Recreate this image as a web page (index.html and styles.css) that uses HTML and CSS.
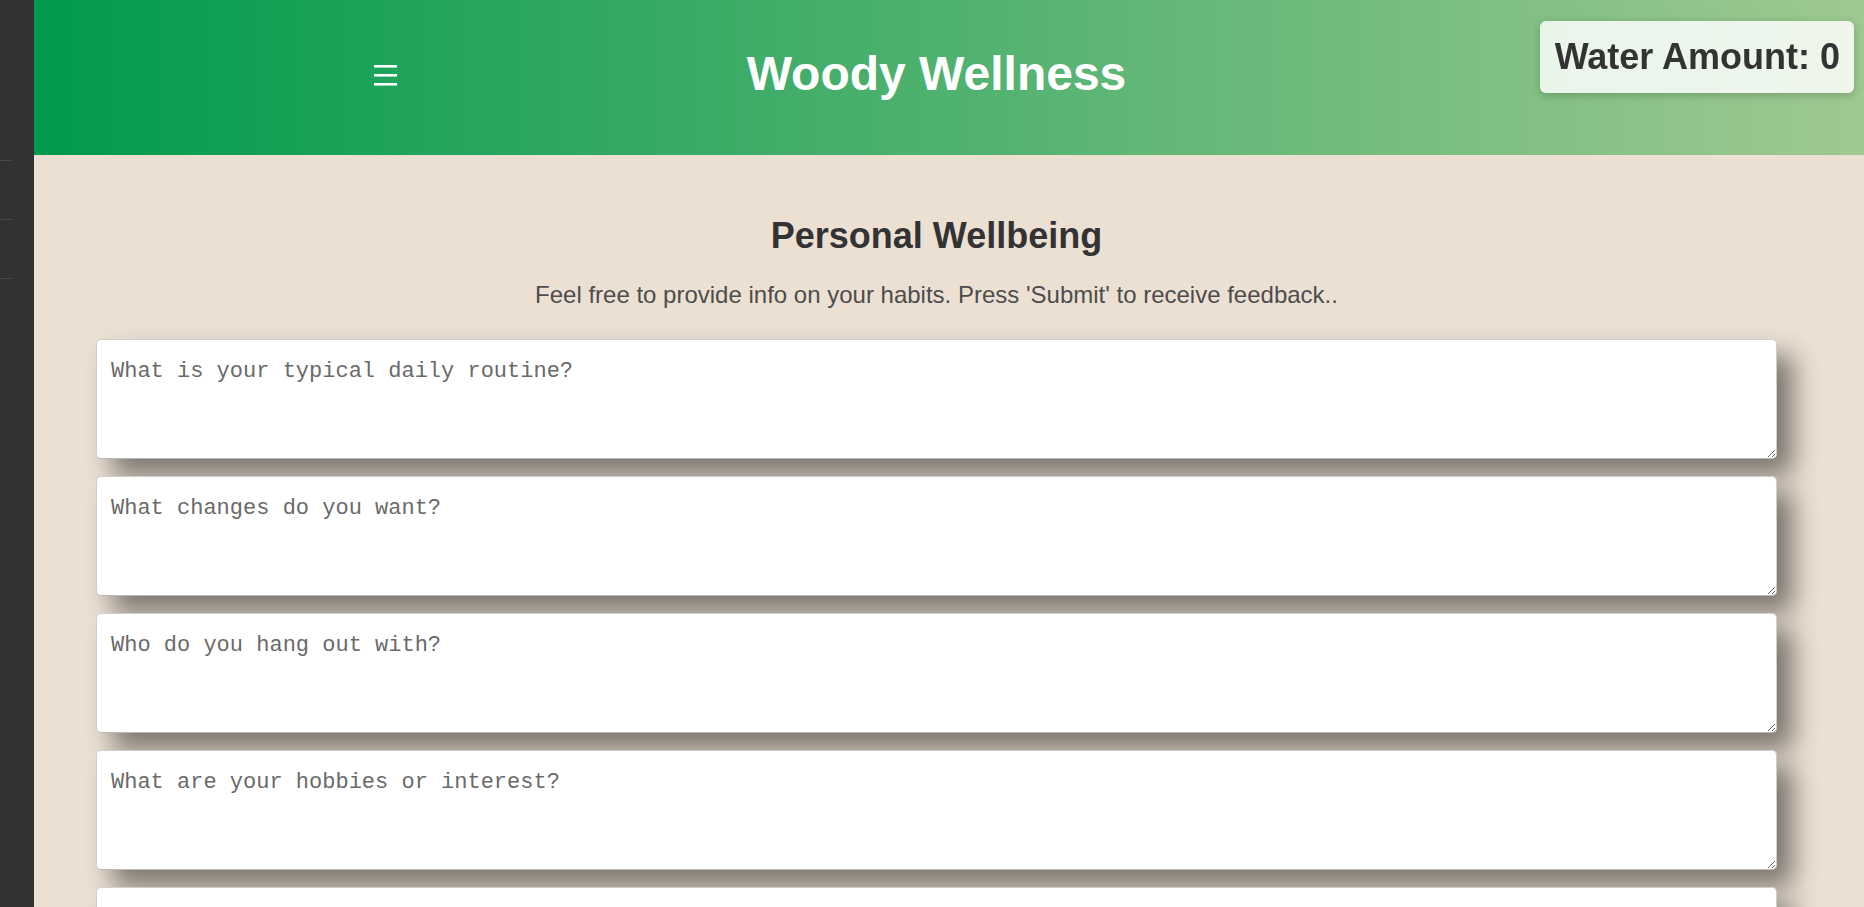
FILE: index.html
```html
<!DOCTYPE html>
<html lang="en">
<head>
<meta charset="utf-8">
<title>Woody Wellness</title>
<link rel="stylesheet" href="styles.css">
</head>
<body>
  <aside class="sidebar">
    <span class="side-line"></span>
    <span class="side-line"></span>
    <span class="side-line"></span>
  </aside>
  <div class="page">
    <header class="topbar">
      <div class="topbar-inner">
        <button class="menu-btn" aria-label="Menu">
          <svg width="23" height="21" viewBox="0 0 23 21"><rect x="0" y="0" width="23" height="2.6" fill="#fff"/><rect x="0" y="9" width="23" height="2.6" fill="#fff"/><rect x="0" y="18" width="23" height="2.6" fill="#fff"/></svg>
        </button>
        <h1 class="brand">Woody Wellness</h1>
        <div></div>
      </div>
    </header>
    <div class="water-box">Water Amount: 0</div>
    <main class="content">
      <h2 class="section-title">Personal Wellbeing</h2>
      <p class="section-sub">Feel free to provide info on your habits. Press 'Submit' to receive feedback..</p>
      <form class="habit-form">
        <textarea class="habit-field" placeholder="What is your typical daily routine?"></textarea>
        <textarea class="habit-field" placeholder="What changes do you want?"></textarea>
        <textarea class="habit-field" placeholder="Who do you hang out with?"></textarea>
        <textarea class="habit-field" placeholder="What are your hobbies or interest?"></textarea>
        <textarea class="habit-field" placeholder="What do you usually eat?"></textarea>
      </form>
    </main>
  </div>
</body>
</html>
```
FILE: styles.css
```css
html, body {
  margin: 0;
  padding: 0;
}
body {
  display: flex;
  min-height: 100vh;
  background: #ece0d3;
  font-family: "Liberation Sans", Arial, sans-serif;
  overflow: hidden;
}
.sidebar {
  width: 34px;
  flex: 0 0 34px;
  background: #323232;
  display: flex;
  flex-direction: column;
  padding-top: 160px;
  box-sizing: border-box;
}
.side-line {
  display: block;
  width: 12px;
  height: 1px;
  background: #4a4a4a;
  margin-bottom: 58px;
}
.page {
  flex: 1;
  display: flex;
  flex-direction: column;
  min-width: 0;
}
.topbar {
  height: 155px;
  background: linear-gradient(to right, #009a4d, #9fc991);
  display: flex;
  align-items: center;
}
.topbar-inner {
  flex: 1;
  display: grid;
  grid-template-columns: 1fr auto 1fr;
  align-items: center;
  padding-right: 25px;
}
.menu-btn {
  justify-self: center;
  background: none;
  border: 0;
  padding: 0;
  margin-right: 9px;
  margin-top: -5px;
  display: flex;
  cursor: pointer;
}
.brand {
  margin: 0;
  color: #fff;
  font-size: 48px;
  font-weight: bold;
  line-height: 1.15;
  margin-top: -7px;
}
.water-box {
  position: fixed;
  top: 21px;
  right: 10px;
  background: rgba(255, 255, 255, 0.83);
  color: #333;
  font-size: 36px;
  font-weight: bold;
  padding: 15px 14px 15px 15px;
  border-radius: 6px;
  box-shadow: 0 2px 8px rgba(0, 0, 0, 0.22);
}
.content {
  padding: 0 87px 0 62px;
  display: flex;
  flex-direction: column;
  align-items: stretch;
}
.section-title {
  margin: 60px 0 0;
  text-align: center;
  font-size: 36px;
  font-weight: bold;
  color: #333;
  line-height: 41px;
}
.section-sub {
  margin: 25px 0 0;
  text-align: center;
  font-size: 24px;
  color: #4d4d4d;
  line-height: 28px;
}
.habit-form {
  margin-top: 30px;
  display: flex;
  flex-direction: column;
  gap: 17px;
}
.habit-field {
  display: block;
  box-sizing: border-box;
  width: 100%;
  height: 120px;
  margin: 0;
  padding: 15px 14px;
  font-family: "Liberation Mono", "DejaVu Sans Mono", monospace;
  font-size: 22px;
  line-height: 1.5;
  color: #333;
  background: #fff;
  border: 1px solid #cfcfcf;
  border-bottom-color: #b9b9b9;
  border-radius: 5px;
  box-shadow: 16px 16px 26px rgba(0, 0, 0, 0.48);
  resize: vertical;
}
.habit-field::placeholder {
  color: #6a6a6a;
}
```
